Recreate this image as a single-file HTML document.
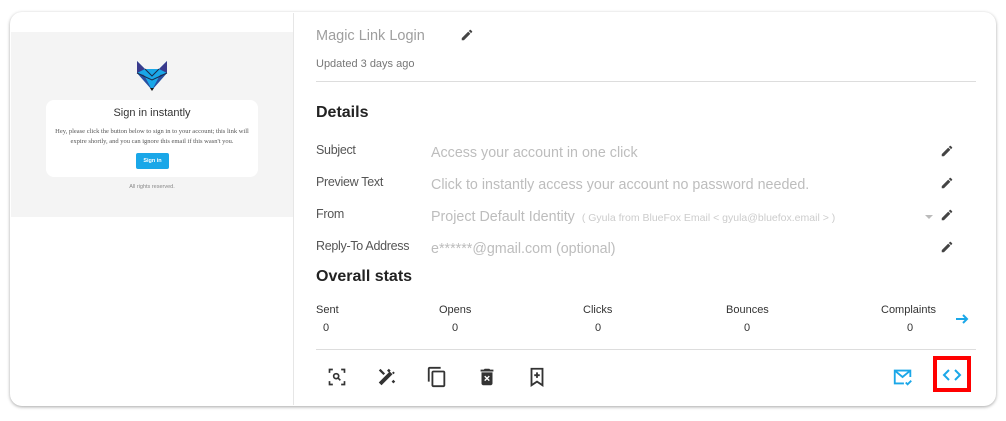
<!DOCTYPE html>
<html><head><meta charset="utf-8"><style>
body{margin:0;width:1006px;height:421px;background:#fff;font-family:"Liberation Sans",sans-serif;position:relative;overflow:hidden}
.a{position:absolute;white-space:nowrap}
.card{position:absolute;left:10px;top:12px;width:986px;height:394px;border-radius:12px;box-shadow:0 1px 3px rgba(0,0,0,.35);background:#fff}
.lbl{font-size:12.5px;color:#555;letter-spacing:-0.3px}
.val{font-size:14px;color:#bdbdbd}
.pen{width:14px;height:14px}
.st{font-size:11px;color:#333}
</style></head><body>
<div class="card"></div>
<div class="a" style="left:293px;top:13px;width:1px;height:392px;background:#e6e6e6"></div>
<div class="a" style="left:11px;top:32px;width:282px;height:185px;background:#f4f4f4"></div>
<svg class="a" style="left:134px;top:58px" width="36" height="34" viewBox="0 0 36 32"><path d="M3 2 L11 10 L25 10 L33 2 L33 14 L18 31 L3 14Z" fill="#1aa7e8"/><path d="M3 2 L11 10 L3 14Z M33 2 L25 10 L33 14Z" fill="#3a3a8c"/><path d="M3 14 L18 31 L10 16Z M33 14 L18 31 L26 16Z" fill="#2b4fa0"/><path d="M3 14 L18 21 L33 14 M11 10 L18 17 L25 10" stroke="#1b2a4a" stroke-width="1" fill="none"/><path d="M16 29 L18 32 L20 29Z" fill="#111"/></svg>
<div class="a" style="left:46px;top:100px;width:212px;height:77px;background:#fff;border-radius:8px"></div>
<div class="a" style="left:46px;top:107px;width:212px;text-align:center;font-size:11px;color:#333">Sign in instantly</div>
<div class="a" style="left:46px;top:127px;width:212px;text-align:center;font-family:'Liberation Serif',serif;font-size:6.5px;color:#555;line-height:10px;white-space:normal">Hey, please click the button below to sign in to your account; this link will<br>expire shortly, and you can ignore this email if this wasn't you.</div>
<div class="a" style="left:136px;top:153px;width:33px;height:16px;background:#1aa7e8;border-radius:2px;color:#fff;font-size:5.5px;font-weight:bold;text-align:center;line-height:16px">Sign in</div>
<div class="a" style="left:46px;top:184px;width:212px;text-align:center;font-size:5.5px;color:#888">All rights reserved.</div>

<div class="a" style="left:316px;top:28px;font-size:14.5px;color:#9e9e9e">Magic Link Login</div>
<svg class="a pen" style="left:460px;top:28px" viewBox="0 0 24 24"><path d="M3 17.25V21h3.75L17.81 9.94l-3.75-3.75L3 17.25zM20.71 7.04a1 1 0 000-1.41l-2.34-2.34a1 1 0 00-1.41 0l-1.83 1.83 3.75 3.75 1.83-1.83z" fill="#444"/></svg>
<div class="a" style="left:316px;top:58px;font-size:11px;color:#777">Updated 3 days ago</div>
<div class="a" style="left:316px;top:81px;width:660px;height:1px;background:#ddd"></div>
<div class="a" style="left:316px;top:104px;font-size:16px;font-weight:bold;color:#222">Details</div>

<div class="a lbl" style="left:316px;top:143px">Subject</div>
<div class="a val" style="left:431px;top:145px;font-size:14.3px">Access your account in one click</div>
<div class="a lbl" style="left:316px;top:175px">Preview Text</div>
<div class="a val" style="left:431px;top:177px;font-size:14.3px">Click to instantly access your account no password needed.</div>
<div class="a lbl" style="left:316px;top:207px">From</div>
<div class="a val" style="left:431px;top:209px;font-size:14.3px">Project Default Identity <span style="font-size:10.5px;color:#ccc;margin-left:3px">( Gyula from BlueFox Email &lt; gyula@bluefox.email &gt; )</span></div>
<div class="a" style="left:925px;top:215px;width:0;height:0;border-left:4px solid transparent;border-right:4px solid transparent;border-top:4px solid #bbb"></div>
<div class="a lbl" style="left:316px;top:239px">Reply-To Address</div>
<div class="a val" style="left:431px;top:241px;font-size:14.3px">e******@gmail.com (optional)</div>
<svg class="a pen" style="left:940px;top:144px" viewBox="0 0 24 24"><path d="M3 17.25V21h3.75L17.81 9.94l-3.75-3.75L3 17.25zM20.71 7.04a1 1 0 000-1.41l-2.34-2.34a1 1 0 00-1.41 0l-1.83 1.83 3.75 3.75 1.83-1.83z" fill="#444"/></svg>
<svg class="a pen" style="left:940px;top:176px" viewBox="0 0 24 24"><path d="M3 17.25V21h3.75L17.81 9.94l-3.75-3.75L3 17.25zM20.71 7.04a1 1 0 000-1.41l-2.34-2.34a1 1 0 00-1.41 0l-1.83 1.83 3.75 3.75 1.83-1.83z" fill="#444"/></svg>
<svg class="a pen" style="left:940px;top:208px" viewBox="0 0 24 24"><path d="M3 17.25V21h3.75L17.81 9.94l-3.75-3.75L3 17.25zM20.71 7.04a1 1 0 000-1.41l-2.34-2.34a1 1 0 00-1.41 0l-1.83 1.83 3.75 3.75 1.83-1.83z" fill="#444"/></svg>
<svg class="a pen" style="left:940px;top:240px" viewBox="0 0 24 24"><path d="M3 17.25V21h3.75L17.81 9.94l-3.75-3.75L3 17.25zM20.71 7.04a1 1 0 000-1.41l-2.34-2.34a1 1 0 00-1.41 0l-1.83 1.83 3.75 3.75 1.83-1.83z" fill="#444"/></svg>

<div class="a" style="left:316px;top:268px;font-size:16px;font-weight:bold;color:#222">Overall stats</div>
<div class="a st" style="left:316px;top:304px">Sent</div><div class="a st" style="left:323px;top:322px">0</div>
<div class="a st" style="left:439px;top:304px">Opens</div><div class="a st" style="left:452px;top:322px">0</div>
<div class="a st" style="left:583px;top:304px">Clicks</div><div class="a st" style="left:595px;top:322px">0</div>
<div class="a st" style="left:726px;top:304px">Bounces</div><div class="a st" style="left:744px;top:322px">0</div>
<div class="a st" style="left:881px;top:304px">Complaints</div><div class="a st" style="left:907px;top:322px">0</div>
<svg class="a" style="left:955px;top:313px" width="14" height="12" viewBox="0 0 14 12"><path d="M1 6H12M8 2L12 6L8 10" stroke="#1aa7e8" stroke-width="2" fill="none"/></svg>
<div class="a" style="left:316px;top:349px;width:660px;height:1px;background:#ddd"></div>

<svg class="a" style="left:327px;top:367px" width="20" height="20" viewBox="0 0 24 24" fill="none" stroke="#333" stroke-width="2"><path d="M3 7V3h4M17 3h4v4M21 17v4h-4M7 21H3v-4"/><circle cx="11" cy="11" r="3"/><path d="M13 13l3 3"/></svg>
<svg class="a" style="left:376px;top:366px" width="22" height="22" viewBox="0 0 24 24" fill="#333"><path d="M3 18l12-12 3 3-12 12zM14 3l2 2-2 2-2-2zM19 6l1.5 1.5-1.5 1.5-1.5-1.5zM4 4l3 3M19 15l2 2-2 2-2-2z"/><path d="M4 4l5 5" stroke="#333" stroke-width="2.5"/></svg>
<svg class="a" style="left:426px;top:366px" width="22" height="22" viewBox="0 0 24 24" fill="#333"><path d="M16 1H4c-1.1 0-2 .9-2 2v14h2V3h12V1zm3 4H8c-1.1 0-2 .9-2 2v14c0 1.1.9 2 2 2h11c1.1 0 2-.9 2-2V7c0-1.1-.9-2-2-2zm0 16H8V7h11v14z"/></svg>
<svg class="a" style="left:476px;top:366px" width="22" height="22" viewBox="0 0 24 24" fill="#333"><path d="M6 19c0 1.1.9 2 2 2h8c1.1 0 2-.9 2-2V7H6v12zM19 4h-3.5l-1-1h-5l-1 1H5v2h14V4z"/><path d="M9.5 11l5 5M14.5 11l-5 5" stroke="#fff" stroke-width="1.5"/></svg>
<svg class="a" style="left:526px;top:366px" width="22" height="22" viewBox="0 0 24 24" fill="none" stroke="#333" stroke-width="2"><path d="M6 3h12v18l-6-4-6 4z"/><path d="M12 7v6M9 10h6"/></svg>
<svg class="a" style="left:892px;top:366px" width="22" height="22" viewBox="0 0 24 24" fill="none" stroke="#1aa7e8" stroke-width="2"><path d="M20 12V5H3v14h10"/><path d="M3 5l8.5 7L20 5"/><path d="M15 18l2 2 4-4"/></svg>
<div class="a" style="left:933px;top:356px;width:38px;height:36px;border:4px solid #f00;box-sizing:border-box"></div>
<svg class="a" style="left:941px;top:367px" width="22" height="16" viewBox="0 0 22 16" fill="none" stroke="#1aa7e8" stroke-width="2"><path d="M8 3L3 8l5 5M14 3l5 5-5 5"/></svg>
</body></html>
